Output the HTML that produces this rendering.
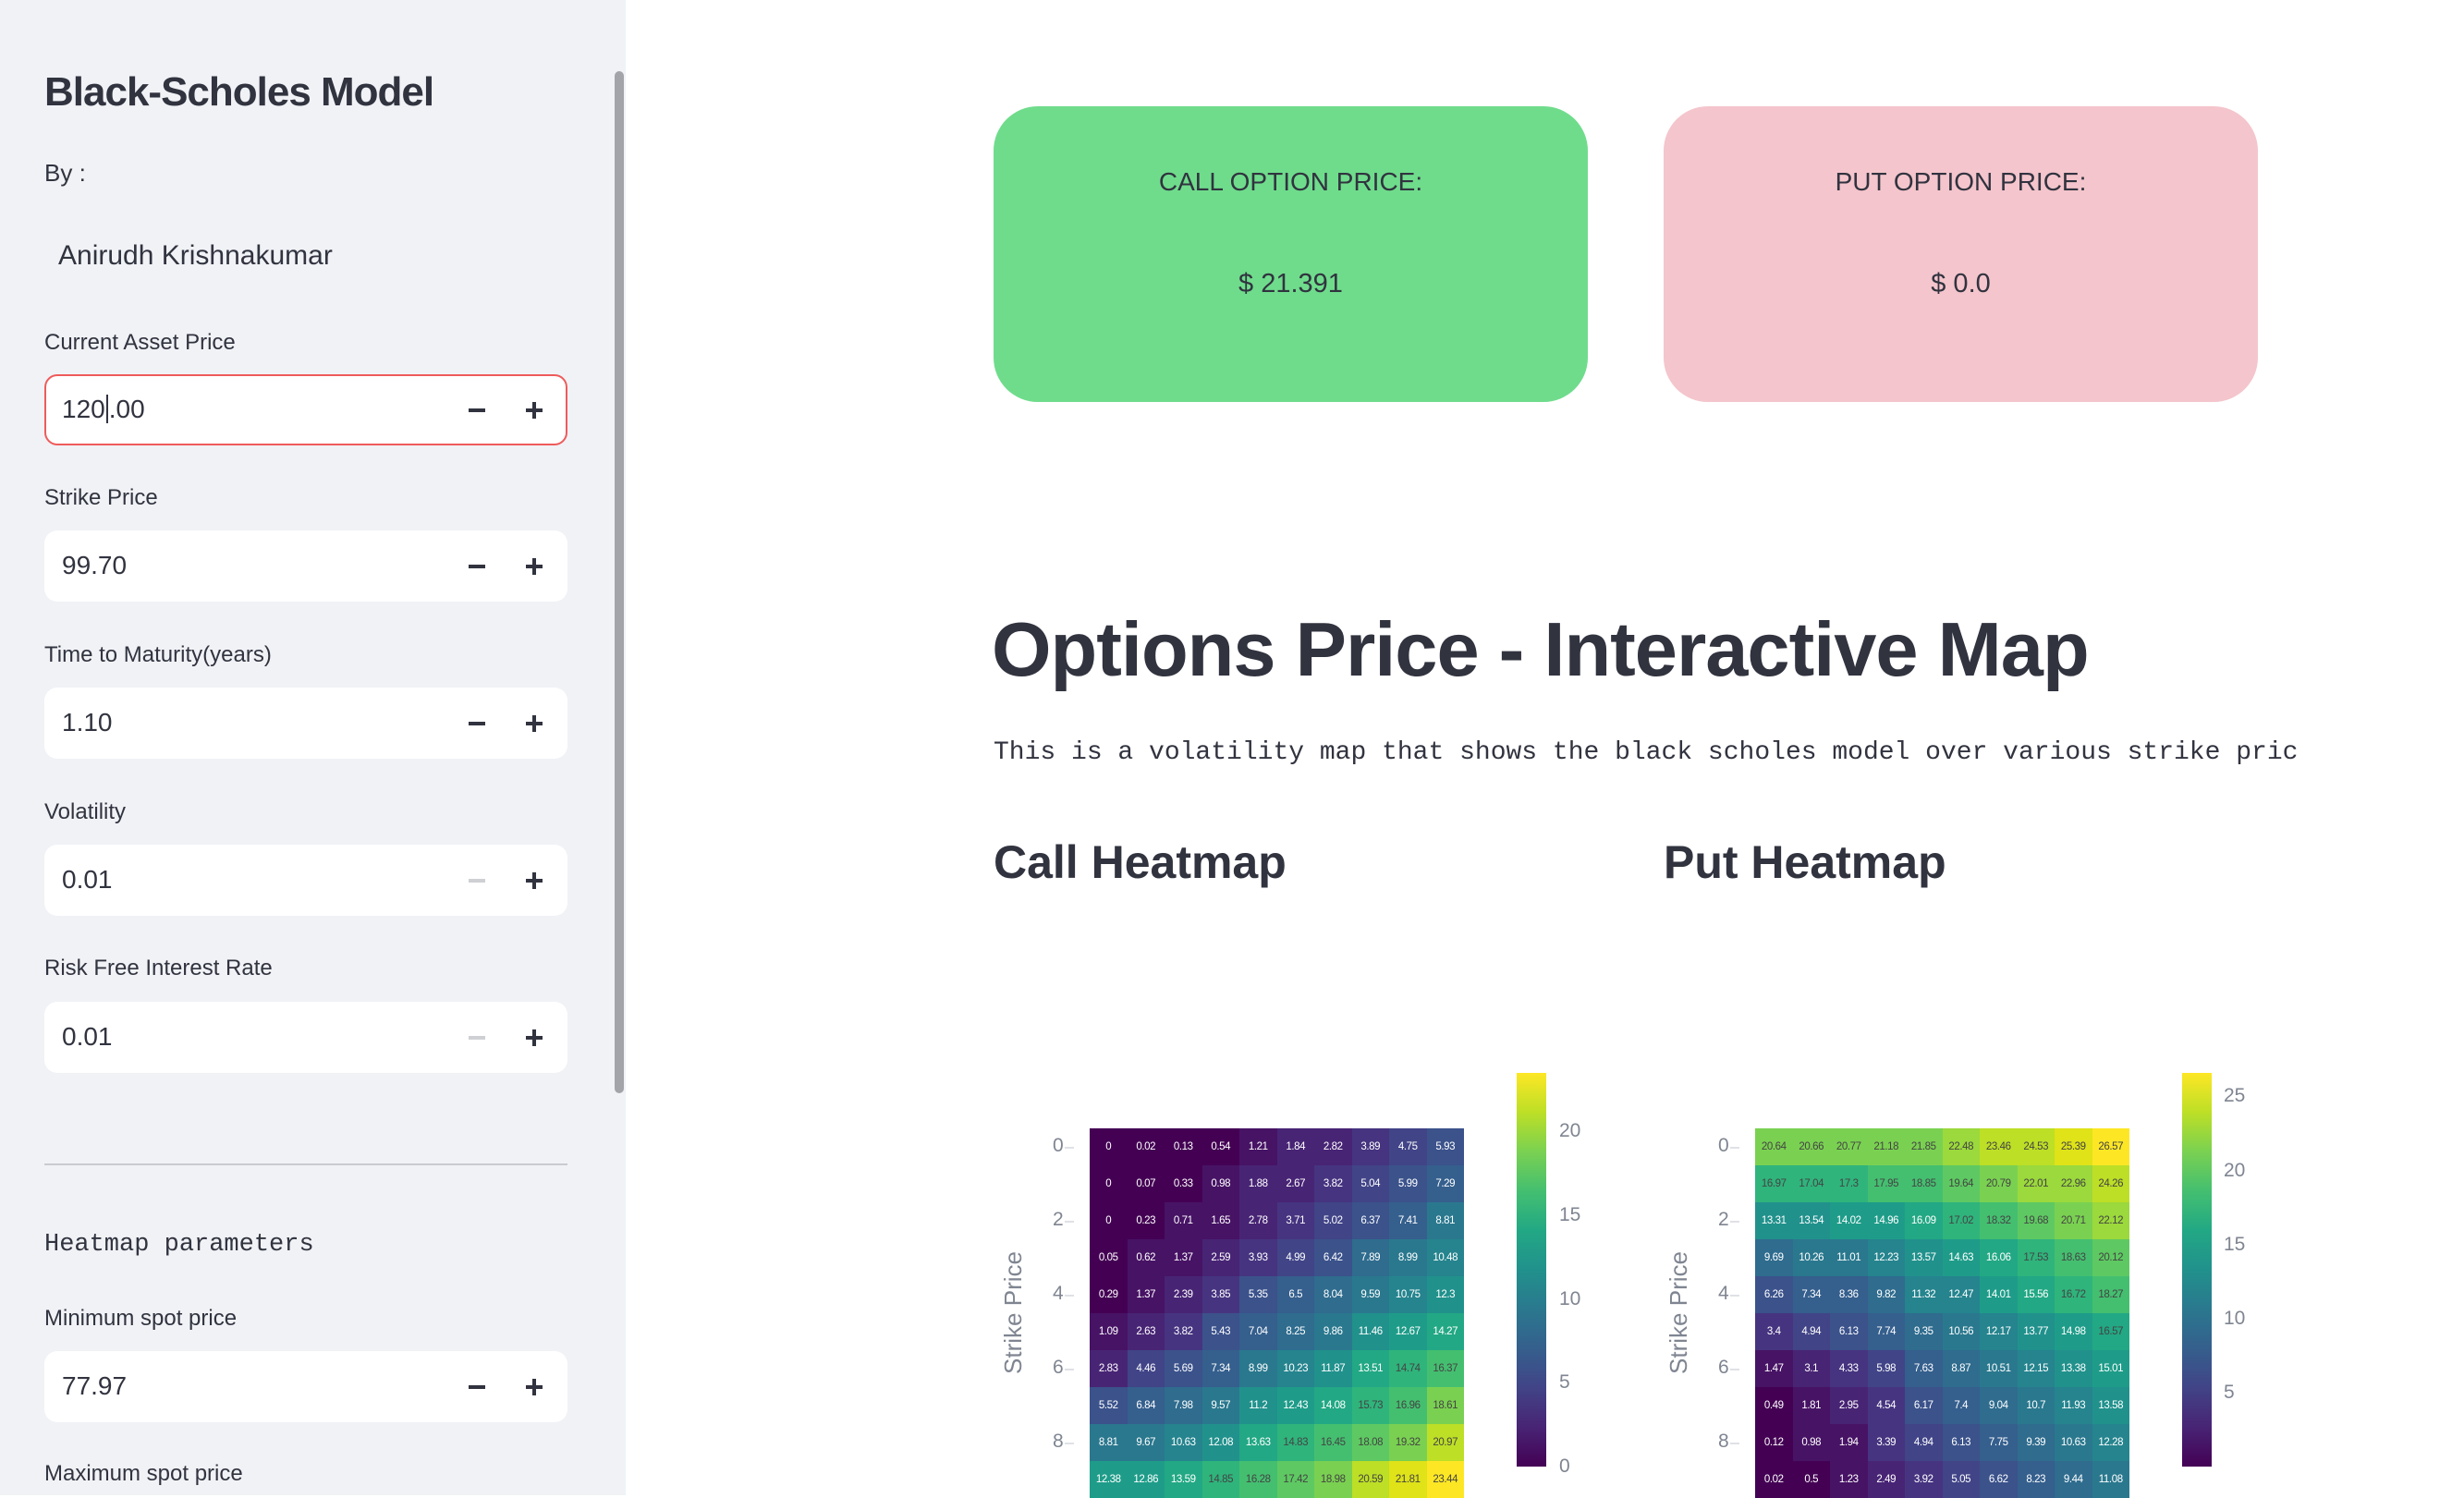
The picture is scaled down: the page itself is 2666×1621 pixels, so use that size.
<!DOCTYPE html>
<html><head><meta charset="utf-8"><style>
*{margin:0;padding:0;box-sizing:border-box}
body{width:2666px;height:1618px;overflow:hidden;background:#fff;font-family:"Liberation Sans",sans-serif;color:#31333f;position:relative}
.a{position:absolute;white-space:nowrap}
#side{position:absolute;left:0;top:0;width:677px;height:1618px;background:#f0f2f6}
#sb{position:absolute;left:665px;top:77px;width:10px;height:1106px;background:#a3a4aa;border-radius:5px}
.lbl{font-size:24px}
.box{position:absolute;left:48px;width:566px;height:77px;background:#fff;border-radius:14px}
.box .v{position:absolute;left:19px;top:22px;font-size:28px}
.mi{position:absolute;left:459px;top:37px;width:18px;height:4px;background:#31333f}
.pl1{position:absolute;left:521px;top:37px;width:18px;height:4px;background:#31333f}
.pl2{position:absolute;left:528px;top:30px;width:4px;height:18px;background:#31333f}
.dis{background:#cfd0d4}
.card{position:absolute;top:115px;width:643px;height:320px;border-radius:48px;text-align:center}
.card .t{position:absolute;left:0;right:0;top:66px;font-size:28px}
.card .p{position:absolute;left:0;right:0;top:176px;font-size:29px}
.hm{position:absolute;top:1221px;display:grid;grid-template-columns:repeat(10,40.5px);grid-auto-rows:40px}
.hm div{font-size:11.5px;color:#fff;display:flex;align-items:center;justify-content:center;letter-spacing:-0.4px}
.hm div.d{color:#444}
.c0{background:#440154}.c1{background:#471365}.c2{background:#482475}.c3{background:#463480}.c4{background:#414487}.c5{background:#3b528b}.c6{background:#355f8d}.c7{background:#2f6c8e}.c8{background:#2a788e}.c9{background:#25848e}.c10{background:#21918c}.c11{background:#1e9c89}.c12{background:#22a884}.c13{background:#2fb47c}.c14{background:#44bf70}.c15{background:#5ec962}.c16{background:#7ad151}.c17{background:#9bd93c}.c18{background:#bddf26}.c19{background:#dfe318}.c20{background:#fde725}
.cb{position:absolute;top:1161px;width:32px;height:426px;background:linear-gradient(to top,#440154,#482475,#414487,#355f8d,#2a788e,#21918c,#22a884,#44bf70,#7ad151,#bddf26,#fde725)}
.tk{position:absolute;font-size:21px;color:#7f8591}
.yt{position:absolute;font-size:21px;color:#7f8591}
.ytd{position:absolute;width:10px;height:2px;background:#dfe1e6}
.sp{position:absolute;font-size:26px;color:#7f8591;transform:rotate(-90deg);transform-origin:center;white-space:nowrap}
</style></head><body>
<div id="side">
<div id="sb"></div>
<div class="a" style="left:48px;top:75px;font-size:44px;font-weight:bold;letter-spacing:-1px">Black-Scholes Model</div>
<div class="a" style="left:48px;top:172px;font-size:26px">By :</div>
<div class="a" style="left:63px;top:260px;font-size:30px">Anirudh Krishnakumar</div>

<div class="a lbl" style="left:48px;top:357px">Current Asset Price</div>
<div class="box" style="top:405px;border:2px solid #ef5b5b"><div class="v" style="left:17px;top:20px">120<span style="border-left:2px solid #31333f;margin:0 1px"></span>.00</div><div class="mi" style="top:35px;left:457px"></div><div class="pl1" style="top:35px;left:519px"></div><div class="pl2" style="top:28px;left:526px"></div></div>

<div class="a lbl" style="left:48px;top:525px">Strike Price</div>
<div class="box" style="top:574px"><div class="v">99.70</div><div class="mi"></div><div class="pl1"></div><div class="pl2"></div></div>

<div class="a lbl" style="left:48px;top:695px">Time to Maturity(years)</div>
<div class="box" style="top:744px"><div class="v">1.10</div><div class="mi"></div><div class="pl1"></div><div class="pl2"></div></div>

<div class="a lbl" style="left:48px;top:865px">Volatility</div>
<div class="box" style="top:914px"><div class="v">0.01</div><div class="mi dis"></div><div class="pl1"></div><div class="pl2"></div></div>

<div class="a lbl" style="left:48px;top:1034px">Risk Free Interest Rate</div>
<div class="box" style="top:1084px"><div class="v">0.01</div><div class="mi dis"></div><div class="pl1"></div><div class="pl2"></div></div>

<div style="position:absolute;left:48px;top:1259px;width:566px;height:2px;background:#c9cbd1"></div>
<div class="a" style="left:48px;top:1332px;font-size:27px;font-family:'Liberation Mono',monospace">Heatmap parameters</div>

<div class="a lbl" style="left:48px;top:1413px">Minimum spot price</div>
<div class="box" style="top:1462px"><div class="v">77.97</div><div class="mi"></div><div class="pl1"></div><div class="pl2"></div></div>
<div class="a lbl" style="left:48px;top:1581px">Maximum spot price</div>
</div>

<div class="card" style="left:1075px;background:#6fdc8c"><div class="t">CALL OPTION PRICE:</div><div class="p">$ 21.391</div></div>
<div class="card" style="left:1800px;background:#f4c5cc"><div class="t">PUT OPTION PRICE:</div><div class="p">$ 0.0</div></div>

<div class="a" style="left:1073px;top:655px;font-size:83px;font-weight:bold;letter-spacing:-1px">Options Price - Interactive Map</div>
<div class="a" style="left:1075px;top:799px;width:1412px;overflow:hidden;font-size:28px;font-family:'Liberation Mono',monospace">This is a volatility map that shows the black scholes model over various strike prices</div>
<div class="a" style="left:1075px;top:904px;font-size:50px;font-weight:bold">Call Heatmap</div>
<div class="a" style="left:1800px;top:904px;font-size:50px;font-weight:bold">Put Heatmap</div>

<!-- Call heatmap -->
<div class="sp" style="left:1030px;top:1405px">Strike Price</div>
<div class="yt" style="left:1139px;top:1228px">0</div><div class="ytd" style="left:1152px;top:1241px"></div>
<div class="yt" style="left:1139px;top:1308px">2</div><div class="ytd" style="left:1152px;top:1321px"></div>
<div class="yt" style="left:1139px;top:1388px">4</div><div class="ytd" style="left:1152px;top:1401px"></div>
<div class="yt" style="left:1139px;top:1468px">6</div><div class="ytd" style="left:1152px;top:1481px"></div>
<div class="yt" style="left:1139px;top:1548px">8</div><div class="ytd" style="left:1152px;top:1561px"></div>
<div class="hm" style="left:1179px">
<div class="c0">0</div><div class="c0">0.02</div><div class="c0">0.13</div><div class="c0">0.54</div><div class="c1">1.21</div><div class="c2">1.84</div><div class="c2">2.82</div><div class="c3">3.89</div><div class="c4">4.75</div><div class="c5">5.93</div>
<div class="c0">0</div><div class="c0">0.07</div><div class="c0">0.33</div><div class="c1">0.98</div><div class="c2">1.88</div><div class="c2">2.67</div><div class="c3">3.82</div><div class="c4">5.04</div><div class="c5">5.99</div><div class="c6">7.29</div>
<div class="c0">0</div><div class="c0">0.23</div><div class="c1">0.71</div><div class="c1">1.65</div><div class="c2">2.78</div><div class="c3">3.71</div><div class="c4">5.02</div><div class="c5">6.37</div><div class="c6">7.41</div><div class="c8">8.81</div>
<div class="c0">0.05</div><div class="c1">0.62</div><div class="c1">1.37</div><div class="c2">2.59</div><div class="c3">3.93</div><div class="c4">4.99</div><div class="c5">6.42</div><div class="c7">7.89</div><div class="c8">8.99</div><div class="c9">10.48</div>
<div class="c0">0.29</div><div class="c1">1.37</div><div class="c2">2.39</div><div class="c3">3.85</div><div class="c5">5.35</div><div class="c6">6.5</div><div class="c7">8.04</div><div class="c8">9.59</div><div class="c9">10.75</div><div class="c10">12.3</div>
<div class="c1">1.09</div><div class="c2">2.63</div><div class="c3">3.82</div><div class="c5">5.43</div><div class="c6">7.04</div><div class="c7">8.25</div><div class="c8">9.86</div><div class="c10">11.46</div><div class="c11">12.67</div><div class="c12">14.27</div>
<div class="c2">2.83</div><div class="c4">4.46</div><div class="c5">5.69</div><div class="c6">7.34</div><div class="c8">8.99</div><div class="c9">10.23</div><div class="c10">11.87</div><div class="c12">13.51</div><div class="c13 d">14.74</div><div class="c14 d">16.37</div>
<div class="c5">5.52</div><div class="c6">6.84</div><div class="c7">7.98</div><div class="c8">9.57</div><div class="c10">11.2</div><div class="c11">12.43</div><div class="c12">14.08</div><div class="c13 d">15.73</div><div class="c14 d">16.96</div><div class="c16 d">18.61</div>
<div class="c8">8.81</div><div class="c8">9.67</div><div class="c9">10.63</div><div class="c10">12.08</div><div class="c12">13.63</div><div class="c13 d">14.83</div><div class="c14 d">16.45</div><div class="c15 d">18.08</div><div class="c16 d">19.32</div><div class="c18 d">20.97</div>
<div class="c11">12.38</div><div class="c11">12.86</div><div class="c12">13.59</div><div class="c13 d">14.85</div><div class="c14 d">16.28</div><div class="c15 d">17.42</div><div class="c16 d">18.98</div><div class="c18 d">20.59</div><div class="c19 d">21.81</div><div class="c20 d">23.44</div>
</div>
<div class="cb" style="left:1641px"></div>
<div class="tk" style="left:1687px;top:1212px">20</div>
<div class="tk" style="left:1687px;top:1303px">15</div>
<div class="tk" style="left:1687px;top:1394px">10</div>
<div class="tk" style="left:1687px;top:1484px">5</div>
<div class="tk" style="left:1687px;top:1575px">0</div>

<!-- Put heatmap -->
<div class="sp" style="left:1750px;top:1405px">Strike Price</div>
<div class="yt" style="left:1859px;top:1228px">0</div><div class="ytd" style="left:1872px;top:1241px"></div>
<div class="yt" style="left:1859px;top:1308px">2</div><div class="ytd" style="left:1872px;top:1321px"></div>
<div class="yt" style="left:1859px;top:1388px">4</div><div class="ytd" style="left:1872px;top:1401px"></div>
<div class="yt" style="left:1859px;top:1468px">6</div><div class="ytd" style="left:1872px;top:1481px"></div>
<div class="yt" style="left:1859px;top:1548px">8</div><div class="ytd" style="left:1872px;top:1561px"></div>
<div class="hm" style="left:1899px">
<div class="c16 d">20.64</div><div class="c16 d">20.66</div><div class="c16 d">20.77</div><div class="c16 d">21.18</div><div class="c16 d">21.85</div><div class="c17 d">22.48</div><div class="c18 d">23.46</div><div class="c18 d">24.53</div><div class="c19 d">25.39</div><div class="c20 d">26.57</div>
<div class="c13 d">16.97</div><div class="c13 d">17.04</div><div class="c13 d">17.3</div><div class="c14 d">17.95</div><div class="c14 d">18.85</div><div class="c15 d">19.64</div><div class="c16 d">20.79</div><div class="c17 d">22.01</div><div class="c17 d">22.96</div><div class="c18 d">24.26</div>
<div class="c10">13.31</div><div class="c10">13.54</div><div class="c11">14.02</div><div class="c11">14.96</div><div class="c12">16.09</div><div class="c13 d">17.02</div><div class="c14 d">18.32</div><div class="c15 d">19.68</div><div class="c16 d">20.71</div><div class="c17 d">22.12</div>
<div class="c7">9.69</div><div class="c8">10.26</div><div class="c8">11.01</div><div class="c9">12.23</div><div class="c10">13.57</div><div class="c11">14.63</div><div class="c12">16.06</div><div class="c13 d">17.53</div><div class="c14 d">18.63</div><div class="c15 d">20.12</div>
<div class="c5">6.26</div><div class="c6">7.34</div><div class="c6">8.36</div><div class="c7">9.82</div><div class="c9">11.32</div><div class="c9">12.47</div><div class="c11">14.01</div><div class="c12">15.56</div><div class="c13 d">16.72</div><div class="c14 d">18.27</div>
<div class="c3">3.4</div><div class="c4">4.94</div><div class="c5">6.13</div><div class="c6">7.74</div><div class="c7">9.35</div><div class="c8">10.56</div><div class="c9">12.17</div><div class="c10">13.77</div><div class="c11">14.98</div><div class="c12 d">16.57</div>
<div class="c1">1.47</div><div class="c2">3.1</div><div class="c3">4.33</div><div class="c4">5.98</div><div class="c6">7.63</div><div class="c7">8.87</div><div class="c8">10.51</div><div class="c9">12.15</div><div class="c10">13.38</div><div class="c11">15.01</div>
<div class="c0">0.49</div><div class="c1">1.81</div><div class="c2">2.95</div><div class="c3">4.54</div><div class="c5">6.17</div><div class="c6">7.4</div><div class="c7">9.04</div><div class="c8">10.7</div><div class="c9">11.93</div><div class="c10">13.58</div>
<div class="c0">0.12</div><div class="c1">0.98</div><div class="c1">1.94</div><div class="c3">3.39</div><div class="c4">4.94</div><div class="c5">6.13</div><div class="c6">7.75</div><div class="c7">9.39</div><div class="c8">10.63</div><div class="c9">12.28</div>
<div class="c0">0.02</div><div class="c0">0.5</div><div class="c1">1.23</div><div class="c2">2.49</div><div class="c3">3.92</div><div class="c4">5.05</div><div class="c5">6.62</div><div class="c6">8.23</div><div class="c7">9.44</div><div class="c8">11.08</div>
</div>
<div class="cb" style="left:2361px"></div>
<div class="tk" style="left:2406px;top:1174px">25</div>
<div class="tk" style="left:2406px;top:1255px">20</div>
<div class="tk" style="left:2406px;top:1335px">15</div>
<div class="tk" style="left:2406px;top:1415px">10</div>
<div class="tk" style="left:2406px;top:1495px">5</div>
</body></html>
